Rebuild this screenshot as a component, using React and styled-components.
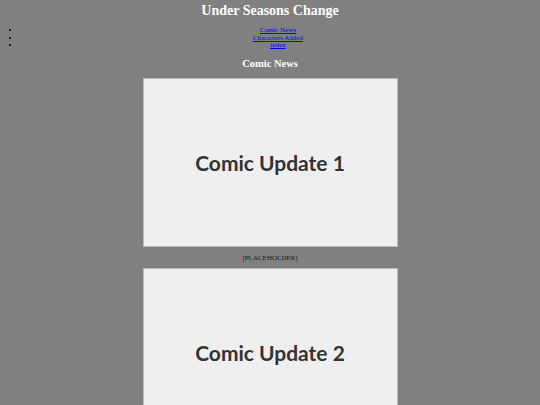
import React from "react";
import styled, { createGlobalStyle } from "styled-components";

const Global = createGlobalStyle`
  html, body { margin: 0; padding: 0; background: #808080; }
  body { font-family: "Liberation Serif", "Times New Roman", serif; }
`;

const Page = styled.div`
  padding: 0 4px;
`;

const Title = styled.h1`
  margin: 3px 0 0;
  font-size: 14px;
  line-height: 16px;
  font-weight: bold;
  color: #fff;
  text-align: center;
`;

const Nav = styled.ul`
  margin: 8px 0 0;
  padding-left: 16px;
  list-style: disc;
  color: #000;
  li {
    font-size: 7px;
    line-height: 7.5px;
    text-align: center;
  }
  a { color: #0000ee; text-decoration: underline; }
`;

const Section = styled.h2`
  margin: 8px 0 0;
  font-size: 10.5px;
  line-height: 12px;
  font-weight: bold;
  color: #fff;
  text-align: center;
`;

const Feed = styled.div`
  display: flex;
  flex-direction: column;
  align-items: center;
  margin: 8px -4px 0;
`;

const Placeholder = styled.div`
  box-sizing: border-box;
  width: 255px;
  height: 169px;
  background: #efefef;
  border: 1px solid #bdbdbd;
  display: flex;
  align-items: center;
  justify-content: center;
  font-family: Lato, "Noto Sans", sans-serif;
  font-weight: bold;
  font-size: 21px;
  color: #333;
`;

const Caption = styled.p`
  margin: 7px 0 6px;
  font-size: 7px;
  line-height: 8px;
  color: #1a1a1a;
  text-align: center;
`;

const links = ["Comic News", "Characters Added", "index"];
const posts = ["Comic Update 1", "Comic Update 2"];

export default function App() {
  return (
    <Page>
      <Global />
      <Title>Under Seasons Change</Title>
      <Nav>
        {links.map((l) => (
          <li key={l}>
            <a href="#">{l}</a>
          </li>
        ))}
      </Nav>
      <Section>Comic News</Section>
      <Feed>
        {posts.map((p) => (
          <React.Fragment key={p}>
            <Placeholder>{p}</Placeholder>
            <Caption>[PLACEHOLDER]</Caption>
          </React.Fragment>
        ))}
      </Feed>
    </Page>
  );
}
